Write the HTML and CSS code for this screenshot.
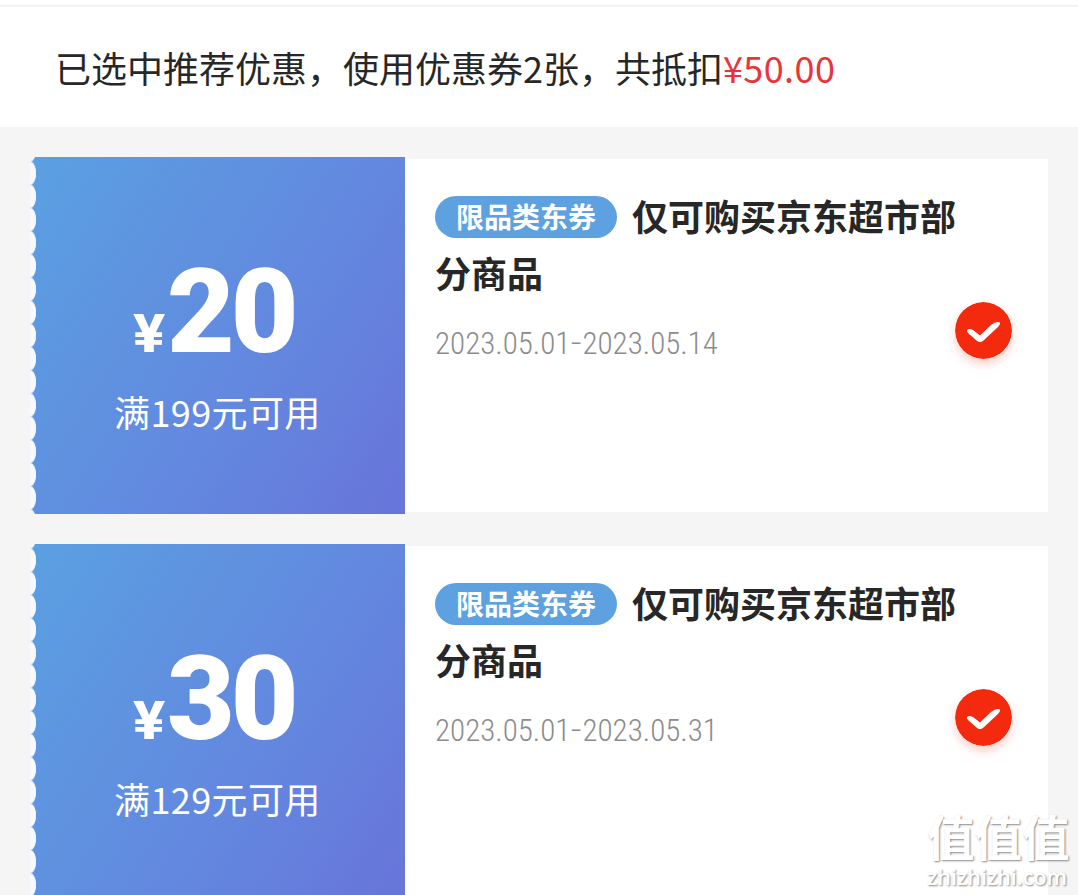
FILE: index.html
```html
<!DOCTYPE html>
<html lang="zh-CN">
<head>
  <meta charset="UTF-8">
  <meta name="viewport" content="width=device-width, initial-scale=1.0">
  <title>优惠券</title>
  <link rel="stylesheet" href="styles.css">
</head>
<body>
  <!-- 优惠汇总 -->
  <header class="summary">
    <p>已选中推荐优惠，使用优惠券2张，共抵扣<span class="total">¥50.00</span></p>
  </header>

  <!-- 优惠券列表 -->
  <main class="coupons">
    <section class="coupon">
      <div class="ticket">
        <div class="amount"><span class="yen">¥</span><span class="number">20</span></div>
        <p class="limit">满199元可用</p>
      </div>
      <div class="info">
        <div class="detail">
          <h2><span class="tag">限品类东券</span>仅可购买京东超市部分商品</h2>
          <p class="date">2023.05.01<i>-</i>2023.05.14</p>
        </div>
        <svg class="check" viewBox="0 0 57 57">
          <circle cx="28.5" cy="28.5" r="28.5" fill="#f42a0e"/>
          <path d="M12 28.3 Q13.5 26 18 28 L25 33.5 L36 23 Q41 19 45 20.5 Q45.5 22 43 25 L28.5 38.5 Q25 41.5 21.5 38.5 L13 31 Q11.7 29.5 12 28.3 Z" fill="#fff"/>
        </svg>
      </div>
    </section>

    <section class="coupon">
      <div class="ticket">
        <div class="amount"><span class="yen">¥</span><span class="number">30</span></div>
        <p class="limit">满129元可用</p>
      </div>
      <div class="info">
        <div class="detail">
          <h2><span class="tag">限品类东券</span>仅可购买京东超市部分商品</h2>
          <p class="date">2023.05.01<i>-</i>2023.05.31</p>
        </div>
        <svg class="check" viewBox="0 0 57 57">
          <circle cx="28.5" cy="28.5" r="28.5" fill="#f42a0e"/>
          <path d="M12 28.3 Q13.5 26 18 28 L25 33.5 L36 23 Q41 19 45 20.5 Q45.5 22 43 25 L28.5 38.5 Q25 41.5 21.5 38.5 L13 31 Q11.7 29.5 12 28.3 Z" fill="#fff"/>
        </svg>
      </div>
    </section>
  </main>

  <!-- 水印 -->
  <div class="watermark">
    <span class="mark">值值值</span>
    <span class="site">zhizhizhi.com</span>
  </div>
</body>
</html>
```

FILE: styles.css
```css
* {
  box-sizing: border-box;
}

html {
  height: 100%;
  overflow: hidden;
}

body {
  height: 895px;
  margin: 0;
  overflow: hidden;
  background: #f5f5f5;
  color: #272727;
  font-family: "Noto Sans CJK SC", sans-serif;
}

p, h2 {
  margin: 0;
}

.summary {
  height: 127px;
  padding: 5px 0 0 55px;
  background: linear-gradient(#f2f2f2, #f2f2f2) 0 5px / 100% 2px no-repeat #fff;
}

.summary p {
  font-size: 36px;
  line-height: 124px;
  white-space: nowrap;
}

.total {
  color: #e9343a;
  letter-spacing: 0.4px;
}

.coupons {
  display: flex;
  flex-direction: column;
  gap: 30px;
  padding: 30px;
}

.coupon {
  display: flex;
  flex: none;
  height: 357px;
}

/* 左侧锯齿边 */
.ticket {
  width: 375px;
  padding-top: 91px;
  border-radius: 5px 0 0 5px;
  background:
    radial-gradient(ellipse 6.5px 12.5px at 0 50%, #f6f9fd 88%, transparent) 0 4.6px / 7px 23.2px repeat-y,
    linear-gradient(122deg, #5aa0e1, #6387df 62%, #6874d9);
  color: #fff;
}

.amount {
  display: flex;
  align-items: baseline;
  height: 128px;
  padding-left: 103px;
  font-family: Roboto, sans-serif;
  line-height: 128px;
}

.yen {
  width: 34px;
  font-size: 53px;
  font-weight: 800;
  transform: scaleX(1.13);
  transform-origin: left;
}

.number {
  font-size: 117px;
  font-weight: 900;
  letter-spacing: -4px;
}

.limit {
  margin-top: 8px;
  padding-left: 84px;
  font-size: 36px;
  letter-spacing: 0.4px;
  line-height: 54px;
}

.info {
  display: flex;
  flex: 1;
  margin: 2px 0;
  padding: 28px 36px 0 30px;
  background: #fff;
}

.detail {
  width: 524px;
  margin-right: -4px;
}

h2 {
  font-size: 36px;
  font-weight: 700;
  line-height: 57px;
}

.tag {
  display: inline-block;
  width: 182px;
  height: 42px;
  margin-right: 15px;
  border-radius: 21px;
  background: #5da1e1;
  color: #fff;
  font-size: 28px;
  line-height: 40px;
  text-align: center;
  vertical-align: 3px;
}

.date {
  margin-top: 22px;
  color: #8c8c8c;
  font-family: Roboto, sans-serif;
  font-size: 31px;
  font-stretch: 75%;
  font-weight: 360;
  line-height: 42px;
}

.date i {
  display: inline-block;
  margin: 0 2px;
  font-style: normal;
  transform: translateY(-1px) scaleX(1.4);
}

.check {
  flex: none;
  width: 57px;
  height: 57px;
  margin-top: 115px;
  border-radius: 50%;
  box-shadow: 0 5px 10px rgba(244, 42, 14, 0.22);
}

.watermark {
  position: absolute;
  right: 8px;
  bottom: 5px;
  display: flex;
  flex-direction: column;
  width: 143px;
  color: #fff;
  text-shadow: 1px 1px 2px #888;
  white-space: nowrap;
}

.mark {
  font-size: 47.5px;
  font-weight: 700;
  line-height: 54px;
}

.site {
  font-family: "Open Sans", sans-serif;
  font-size: 21.5px;
  font-weight: 600;
  line-height: 27px;
}
```
